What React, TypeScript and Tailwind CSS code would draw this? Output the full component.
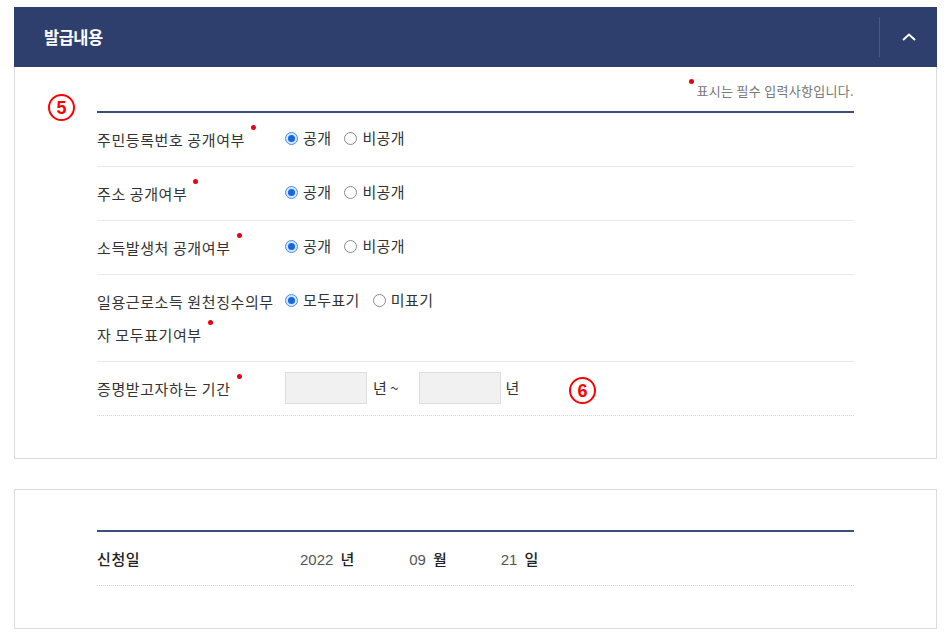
import React from 'react'

const font = { fontFamily: '"Noto Sans CJK KR", "Noto Sans", sans-serif' }
const latin = { fontFamily: '"Liberation Sans", Arial, sans-serif' }

function Radio({ checked }: { checked?: boolean }) {
  return checked ? (
    <span className="w-[13px] h-[13px] rounded-full border border-[#4a8de6] bg-[#d6e6fb] flex items-center justify-center shrink-0">
      <span className="w-[7px] h-[7px] rounded-full bg-[#1467e0]" />
    </span>
  ) : (
    <span className="w-[13px] h-[13px] rounded-full border border-[#8a8a8a] bg-white shrink-0" />
  )
}

function Options({ items }: { items: [string, boolean][] }) {
  return (
    <div className="flex items-center h-[30px] gap-[13px]">
      {items.map(([label, checked]) => (
        <label key={label} className="flex items-center gap-[5px] text-[15px] tracking-[0.4px] text-[#333]">
          <Radio checked={checked} />
          <span>{label}</span>
        </label>
      ))}
    </div>
  )
}

function Dot() {
  return <span className="inline-block align-top ml-[6px] mt-[2px] w-[5px] h-[5px] rounded-full bg-[#e60012]" />
}

function Row({
  label,
  children,
  dotted,
}: {
  label: React.ReactNode
  children: React.ReactNode
  dotted?: boolean
}) {
  return (
    <div
      className={
        'flex items-start py-[10px] border-b ' +
        (dotted ? 'border-dotted border-[#d4d4d4]' : 'border-[#e9e9e9]')
      }
    >
      <div className="w-[188px] shrink-0 text-[15px] tracking-[0.6px] leading-[33px] text-[#333]">{label}</div>
      <div className="flex-1">{children}</div>
    </div>
  )
}

function Circled({ n, className }: { n: string; className: string }) {
  return (
    <span
      className={
        'absolute w-[27px] h-[27px] rounded-full border-[2.5px] border-[#f00] text-[#f00] flex items-center justify-center text-[18px] font-bold leading-none ' +
        className
      }
      style={latin}
    >
      {n}
    </span>
  )
}

function DatePart({ num, unit, className }: { num: string; unit: string; className: string }) {
  return (
    <span className={className}>
      <span className="text-[15px] text-[#555]" style={latin}>{num}</span>
      <span className="ml-[7px] text-[15px] font-medium">{unit}</span>
    </span>
  )
}

export default function App() {
  return (
    <div className="min-h-[641px] bg-white pt-[7px] pl-[14px]" style={font}>
      <div className="w-[923px]">
        {/* Header */}
        <div className="h-[60px] bg-[#2e3f6d] flex items-center">
          <div className="flex-1 pl-[30px] text-white font-bold text-[16.5px] tracking-[-0.5px]">발급내용</div>
          <div className="w-[58px] h-[40px] border-l border-[#4a5a86] flex items-center justify-center">
            <svg width="14" height="8" viewBox="0 0 14 8" fill="none">
              <polyline points="1,7 7,1.5 13,7" stroke="#fff" strokeWidth="2" />
            </svg>
          </div>
        </div>

        {/* Panel 1 */}
        <div className="relative border-x border-b border-[#dcdcdc] px-[82px] pt-[12px] pb-[42px]">
          <Circled n="5" className="left-[33px] top-[27px]" />
          <Circled n="6" className="left-[554px] top-[310px]" />

          <div className="flex justify-end items-start h-[32px] text-[13px] text-[#777]">
            <span className="w-[5px] h-[5px] rounded-full bg-[#e60012] mt-[0px] mr-[3px]" />
            <span className="mt-[2px] tracking-[0.3px]">표시는 필수 입력사항입니다.</span>
          </div>

          <div className="border-t-2 border-[#3b4e7e]">
            <Row label={<>주민등록번호 공개여부<Dot /></>}>
              <Options items={[['공개', true], ['비공개', false]]} />
            </Row>
            <Row label={<>주소 공개여부<Dot /></>}>
              <Options items={[['공개', true], ['비공개', false]]} />
            </Row>
            <Row label={<>소득발생처 공개여부<Dot /></>}>
              <Options items={[['공개', true], ['비공개', false]]} />
            </Row>
            <Row
              label={
                <>
                  일용근로소득 원천징수의무
                  <br />자 모두표기여부<Dot />
                </>
              }
            >
              <Options items={[['모두표기', true], ['미표기', false]]} />
            </Row>
            <Row dotted label={<>증명받고자하는 기간<Dot /></>}>
              <div className="flex items-center h-[32px] text-[15px] text-[#333]">
                <span className="w-[82px] h-[32px] bg-[#f1f1f1] border border-[#dedede]" />
                <span className="ml-[6px]">년 ~</span>
                <span className="ml-[20px] w-[82px] h-[32px] bg-[#f1f1f1] border border-[#dedede]" />
                <span className="ml-[5px]">년</span>
              </div>
            </Row>
          </div>
        </div>

        {/* Panel 2 */}
        <div className="mt-[30px] border border-[#dcdcdc] px-[82px] pt-[40px] pb-[42px]">
          <div className="border-t-2 border-[#3b4e7e]">
            <Row dotted label={<span className="font-medium text-[#222]">신청일</span>}>
              <div className="flex items-center h-[33px] text-[#222]">
                <DatePart num="2022" unit="년" className="ml-[15px]" />
                <DatePart num="09" unit="월" className="ml-[55px]" />
                <DatePart num="21" unit="일" className="ml-[54px]" />
              </div>
            </Row>
          </div>
        </div>
      </div>
    </div>
  )
}
